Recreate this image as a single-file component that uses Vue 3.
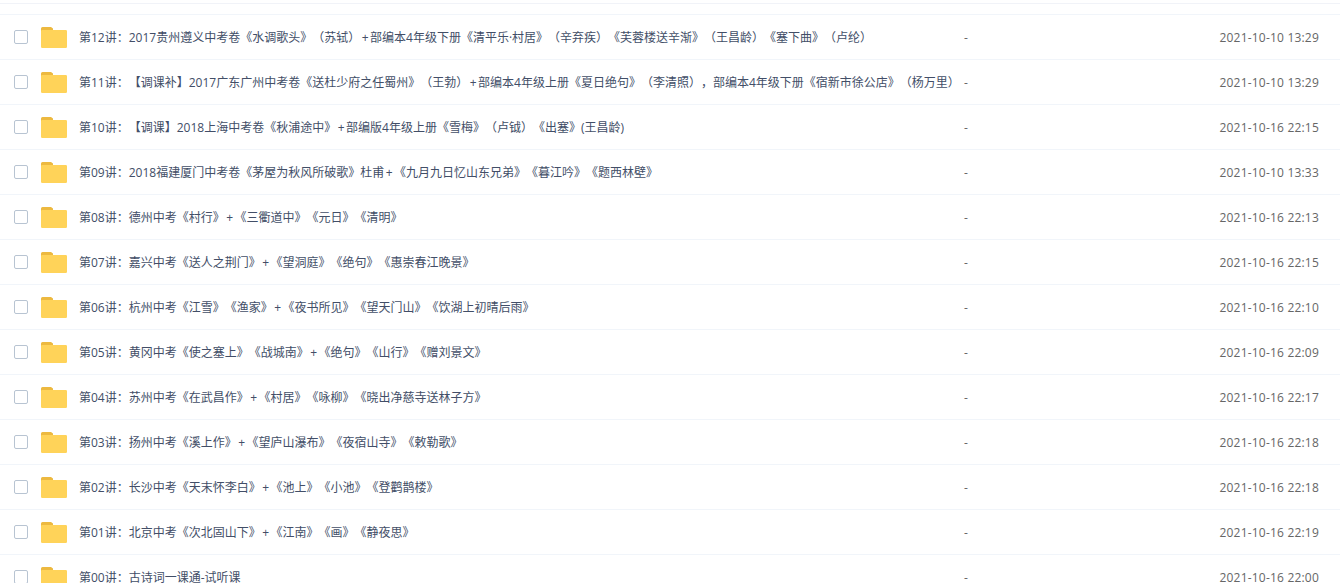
<script setup>
const rows = [
  ['第12讲：2017贵州遵义中考卷《水调歌头》（苏轼）+部编本4年级下册《清平乐·村居》（辛弃疾）《芙蓉楼送辛渐》（王昌龄）《塞下曲》（卢纶）', '2021-10-10 13:29'],
  ['第11讲：【调课补】2017广东广州中考卷《送杜少府之任蜀州》（王勃）+部编本4年级上册《夏日绝句》（李清照），部编本4年级下册《宿新市徐公店》（杨万里）', '2021-10-10 13:29'],
  ['第10讲：【调课】2018上海中考卷《秋浦途中》+部编版4年级上册《雪梅》（卢钺）《出塞》(王昌龄)', '2021-10-16 22:15'],
  ['第09讲：2018福建厦门中考卷《茅屋为秋风所破歌》杜甫+《九月九日忆山东兄弟》《暮江吟》《题西林壁》', '2021-10-10 13:33'],
  ['第08讲：德州中考《村行》+《三衢道中》《元日》《清明》', '2021-10-16 22:13'],
  ['第07讲：嘉兴中考《送人之荆门》+《望洞庭》《绝句》《惠崇春江晚景》', '2021-10-16 22:15'],
  ['第06讲：杭州中考《江雪》《渔家》+《夜书所见》《望天门山》《饮湖上初晴后雨》', '2021-10-16 22:10'],
  ['第05讲：黄冈中考《使之塞上》《战城南》+《绝句》《山行》《赠刘景文》', '2021-10-16 22:09'],
  ['第04讲：苏州中考《在武昌作》+《村居》《咏柳》《晓出净慈寺送林子方》', '2021-10-16 22:17'],
  ['第03讲：扬州中考《溪上作》+《望庐山瀑布》《夜宿山寺》《敕勒歌》', '2021-10-16 22:18'],
  ['第02讲：长沙中考《天末怀李白》+《池上》《小池》《登鹳鹊楼》', '2021-10-16 22:18'],
  ['第01讲：北京中考《次北固山下》+《江南》《画》《静夜思》', '2021-10-16 22:19'],
  ['第00讲：古诗词一课通-试听课', '2021-10-16 22:00'],
].map(([name, time]) => {
  const i = name.indexOf('+')
  return i < 0
    ? { name, head: name, tail: '', plus: false, time }
    : { name, head: name.slice(0, i), tail: name.slice(i + 1), plus: true, time }
})
</script>

<template>
  <div class="page">
    <div class="top-row"></div>
    <div v-for="r in rows" :key="r.name" class="row">
      <span class="check"></span>
      <svg class="folder" width="26" height="21" viewBox="0 0 26 21">
        <path d="M0 1.5A1.5 1.5 0 0 1 1.5 0h8.5l2 1.500v5H0z" fill="#EDB93F" />
        <path d="M0 4.200A1.200 1.200 0 0 1 1.200 3h23.600A1.200 1.200 0 0 1 26 4.200v15.600a1.200 1.200 0 0 1-1.200 1.200H1.200A1.200 1.200 0 0 1 0 19.800z" fill="#FFD359" />
      </svg>
      <span class="name">{{ r.head }}<span v-if="r.plus" class="plus">+</span>{{ r.tail }}</span>
      <span class="size">-</span>
      <span class="time">{{ r.time }}</span>
    </div>
  </div>
</template>

<style>
html, body { margin: 0; background: #fff; overflow: hidden; }
</style>

<style scoped>
.page {
  width: 1340px;
  height: 583px;
  overflow: hidden;
  background: #fff;
  font-size: 12px;
  color: #666;
}
.top-row {
  margin-top: 3px;
  height: 10px;
  border-top: 1px solid #f1f3f8;
  border-bottom: 1px solid #f1f5fa;
}
.row {
  display: flex;
  align-items: center;
  height: 44px;
  border-bottom: 1px solid #f1f5fa;
}
.check {
  width: 12px;
  height: 12px;
  margin-left: 14px;
  border: 1px solid #b8c4d2;
  border-radius: 2px;
  flex: none;
}
.folder { margin-left: 13px; flex: none; }
.name {
  margin-left: 12px;
  width: 885px;
  flex: none;
  white-space: nowrap;
  color: #424e67;
  font-family: "Open Sans", "Noto Sans CJK SC", sans-serif;
  text-spacing-trim: space-all;
}
.plus { margin: 0 1.5px; }
.size { width: 255px; flex: none; color: #666; font-family: "Open Sans", sans-serif; }
.time { width: 100px; text-align: right; flex: none; color: #666; font-family: "Open Sans", sans-serif; letter-spacing: 0.2px; white-space: nowrap; }
</style>
